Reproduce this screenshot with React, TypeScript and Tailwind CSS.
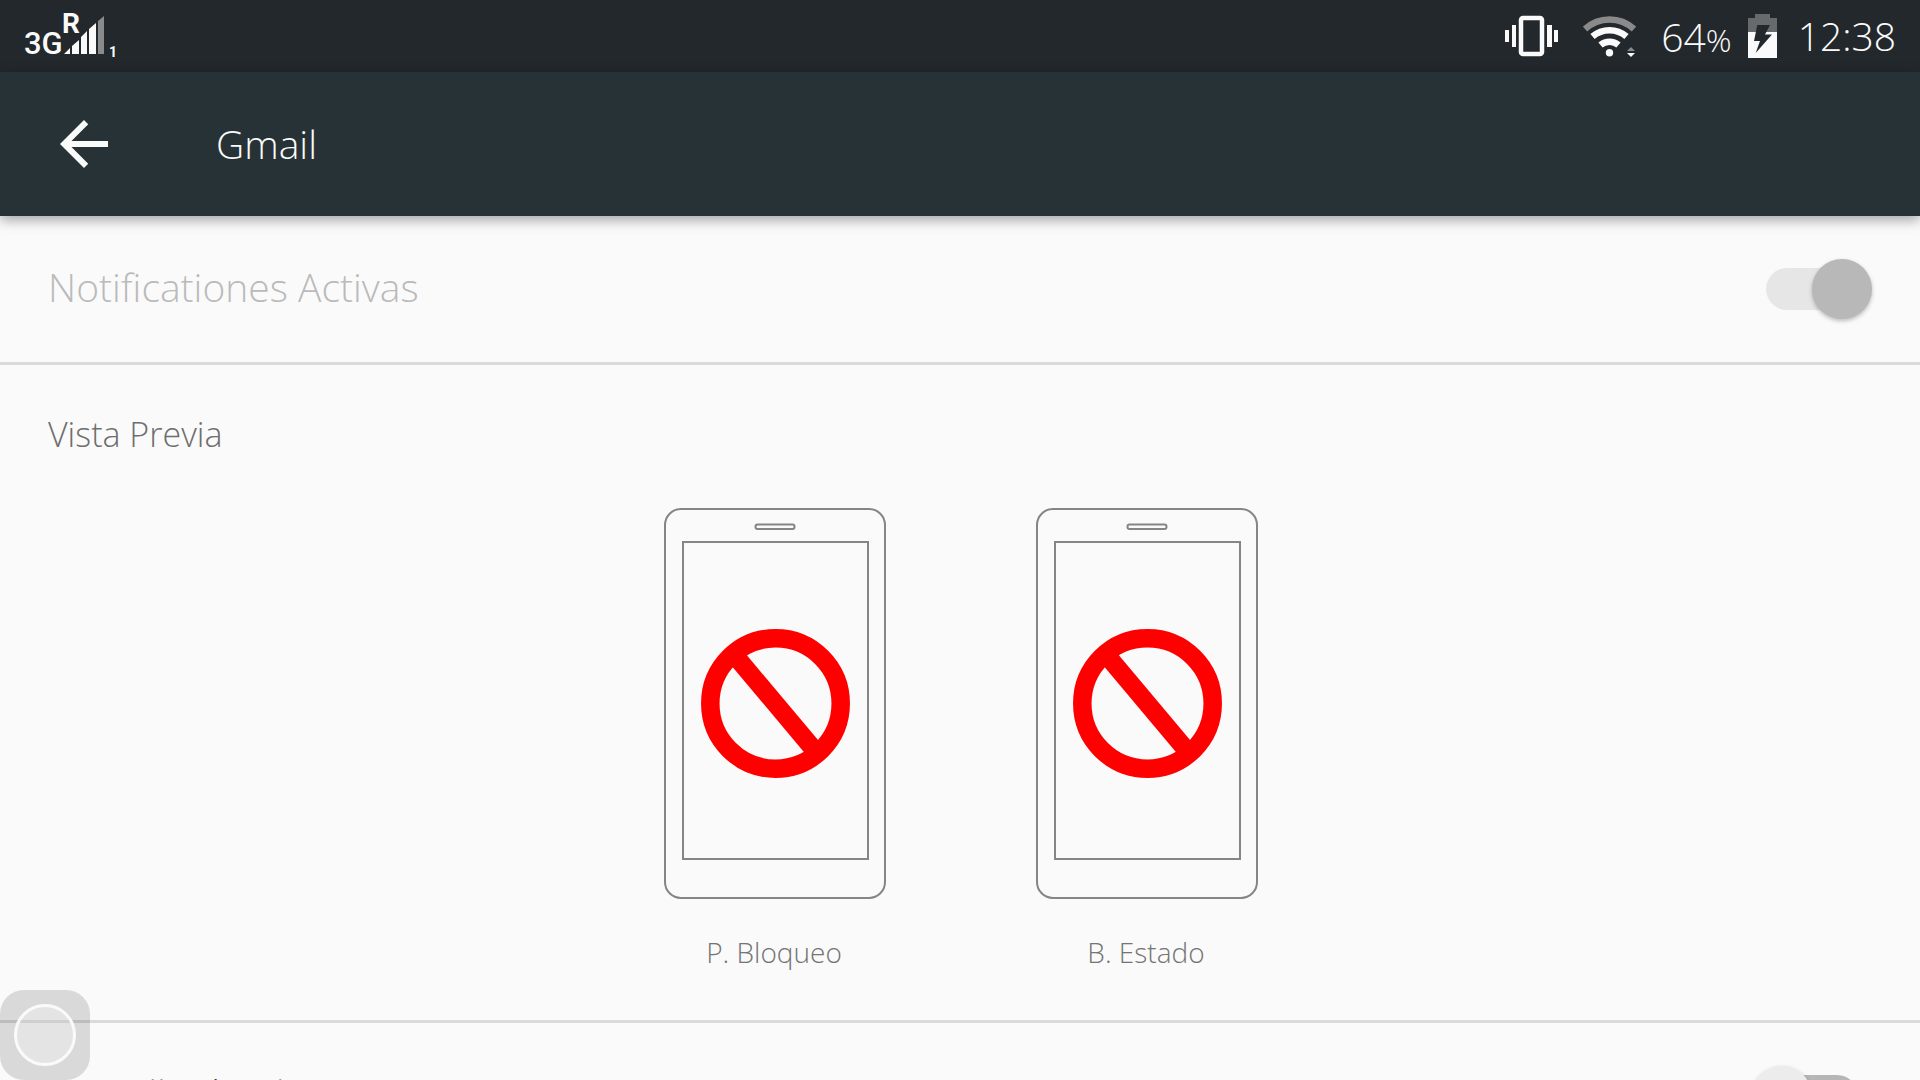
import { useState } from 'react'

function SignalIcon() {
  return (
    <svg className="h-[72px] w-[96px]" viewBox="24 0 96 72" fill="#fafafa">
      <text x="24" y="54" fontSize="31" fontWeight="500" fontFamily="Roboto, sans-serif">3G</text>
      <text x="62" y="33" fontSize="28" fontWeight="700" fontFamily="Roboto, sans-serif">R</text>
      <path d="M64 54l6-6v6zM72 54v-8l7-6v14zM81 54V37l6-6v23zM89 54V29l7-6v31z" />
      <path d="M98 54V21l6-5v38z" fill="#8a8a8a" />
      <text x="109" y="57" fontSize="14" fontWeight="700" fontFamily="Roboto, sans-serif">1</text>
    </svg>
  )
}

function VibrateIcon() {
  return (
    <svg className="h-[72px] w-[54px]" viewBox="25 0 54 72" fill="#fafafa">
      <path d="M25 30h4v12h-4zM32 25h4v22h-4zM67 25h5v22h-5zM74 30h4v12h-4z" />
      <rect x="41" y="18" width="21" height="36" rx="2" fill="none" stroke="#fafafa" strokeWidth="4.5" />
    </svg>
  )
}

function WifiIcon() {
  return (
    <svg className="h-[72px] w-[54px]" viewBox="103 0 54 72" fill="none" strokeWidth="6.5">
      <path d="M105 29A36 36 0 0 1 154 29" stroke="#8a8a8a" />
      <path d="M112.500 36.500A26 26 0 0 1 146.500 36.500" stroke="#fafafa" />
      <path d="M120.500 45A14 14 0 0 1 138.500 45" stroke="#fafafa" />
      <circle cx="129.500" cy="52.700" r="3.700" fill="#fafafa" />
      <path d="M147 51l4-4 4 4z" fill="#8a8a8a" />
      <path d="M147 53l4 4 4-4z" fill="#fafafa" />
    </svg>
  )
}

function BatteryIcon() {
  return (
    <svg className="h-[72px] w-[30px]" viewBox="107 0 30 72">
      <path d="M107 18h7v-4h15v4h7v14h-29z" fill="#666a6c" />
      <path d="M107 32h29v26h-29z" fill="#fafafa" />
      <path d="M116.300 25H129l-5 9.500h7L114.700 53l4.300-12h-6z" fill="#22282c" />
    </svg>
  )
}

function PhonePreview({ label }: { label: string }) {
  return (
    <figure className="flex flex-col items-center">
      <svg className="h-[392px] w-[224px]" viewBox="-2 0 224 392" fill="none" stroke="#858585" strokeWidth="2">
        <rect x="1" y="1" width="220" height="389" rx="16" />
        <rect x="91.500" y="16.500" width="39" height="4.500" rx="2" />
        <rect x="19" y="34" width="185" height="317" />
        <circle cx="111.500" cy="195.500" r="65.200" stroke="#ff0000" strokeWidth="18.500" />
        <path d="M71 147.500L152 244" stroke="#ff0000" strokeWidth="18.500" />
      </svg>
      <figcaption className="mt-7 text-[28px] leading-12 text-[#747474]">{label}</figcaption>
    </figure>
  )
}

type SwitchRowProps = {
  id: string
  label: string
  checked: boolean
  disabled?: boolean
  onChange?: () => void
}

function SwitchRow({ id, label, checked, disabled, onChange }: SwitchRowProps) {
  return (
    <div className="flex shrink-0 items-center justify-between border-b-3 border-[#dadada] px-12 py-[43px]">
      <label htmlFor={id} className={`pb-1 text-[39px] leading-14 ${disabled ? 'text-[#bababa]' : 'text-[#3c3c3c]'}`}>
        {label}
      </label>
      <input
        id={id}
        type="checkbox"
        role="switch"
        checked={checked}
        disabled={disabled}
        readOnly={!onChange}
        onChange={onChange}
        className="relative h-[60px] w-[120px] appearance-none before:absolute before:inset-x-[14px] before:inset-y-[9px] before:rounded-full before:bg-[#b6b6b6] after:absolute after:left-0 after:top-0 after:size-[60px] after:rounded-full after:bg-[#ececec] after:shadow-[0_2px_4px_rgba(0,0,0,0.25)] checked:before:bg-[#e6e6e6] checked:after:left-[60px] checked:after:bg-[#b8b8b8]"
      />
    </div>
  )
}

export default function App() {
  const [lock, setLock] = useState(false)

  return (
    <div className="flex h-screen flex-col overflow-hidden bg-[#fafafa] font-['Open_Sans','Lato',sans-serif] font-light">
      <div className="flex h-[72px] shrink-0 items-center justify-between bg-[#22282c] px-6 text-[#fafafa]">
        <SignalIcon />
        <div className="flex items-center">
          <VibrateIcon />
          <span className="ml-6"><WifiIcon /></span>
          <span className="ml-6 pt-1 text-[39px] leading-14">64<span className="text-[32px]">%</span></span>
          <span className="ml-4"><BatteryIcon /></span>
          <span className="ml-5 text-[39px] leading-14">12:38</span>
        </div>
      </div>

      <header className="z-10 flex h-36 shrink-0 items-center bg-[#273237] px-12 text-[#fafafa] shadow-[0_4px_12px_rgba(0,0,0,0.35)]">
        <button aria-label="Atrás">
          <svg className="size-[72px]" viewBox="0 0 24 24" fill="currentColor">
            <path d="M20 11H7.830l5.590-5.590L12 4l-8 8 8 8 1.410-1.410L7.830 13H20v-2z" />
          </svg>
        </button>
        <h1 className="ml-24 text-[39px] leading-14">Gmail</h1>
      </header>

      <main className="flex flex-1 flex-col">
        <SwitchRow id="active" label="Notificationes Activas" checked disabled />

        <section className="shrink-0 border-b-3 border-[#dadada] pb-11 pt-11">
          <h2 className="px-12 text-[34px] leading-[51px] text-[#6e6e6e]">Vista Previa</h2>
          <div className="mt-12 flex justify-center gap-[148px]">
            <PhonePreview label="P. Bloqueo" />
            <PhonePreview label="B. Estado" />
          </div>
        </section>

        <SwitchRow id="lock" label="Pantalla de Bloqueo" checked={lock} onChange={() => setLock(!lock)} />
      </main>

      <button aria-label="Menú" className="fixed bottom-0 left-0 z-20 flex size-[90px] items-center justify-center rounded-3xl bg-black/13">
        <span className="size-[62px] rounded-full border-3 border-[#fafafa] bg-white/25" />
      </button>
    </div>
  )
}
